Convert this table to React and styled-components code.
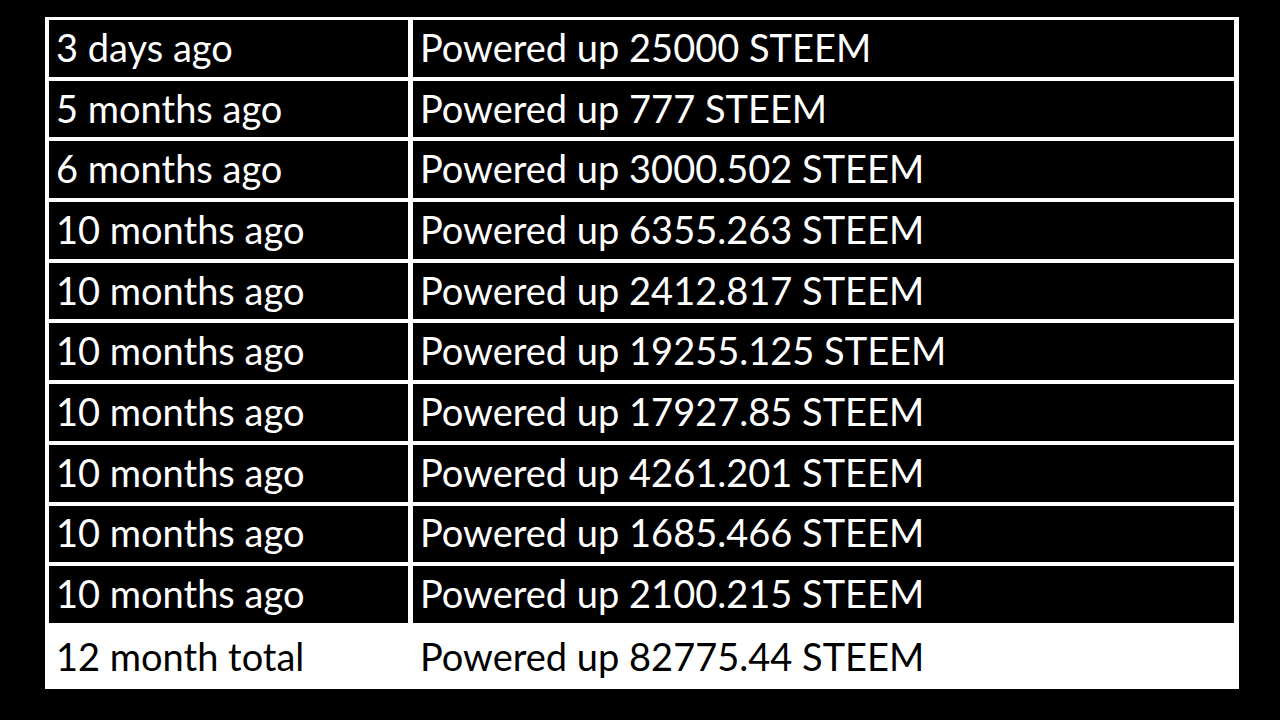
import React from 'react'
import styled, { createGlobalStyle } from 'styled-components'

const rows = [
  ['3 days ago', 'Powered up 25000 STEEM'],
  ['5 months ago', 'Powered up 777 STEEM'],
  ['6 months ago', 'Powered up 3000.502 STEEM'],
  ['10 months ago', 'Powered up 6355.263 STEEM'],
  ['10 months ago', 'Powered up 2412.817 STEEM'],
  ['10 months ago', 'Powered up 19255.125 STEEM'],
  ['10 months ago', 'Powered up 17927.85 STEEM'],
  ['10 months ago', 'Powered up 4261.201 STEEM'],
  ['10 months ago', 'Powered up 1685.466 STEEM'],
  ['10 months ago', 'Powered up 2100.215 STEEM'],
]

const GlobalStyle = createGlobalStyle`
  html, body {
    margin: 0;
    padding: 0;
    background: #000;
  }
  body {
    width: 1280px;
    height: 720px;
    overflow: hidden;
  }
`

const Page = styled.div`
  width: 1280px;
  height: 720px;
  background: #000;
  padding: 17px 0 0 45px;
  box-sizing: border-box;
`

const Table = styled.div`
  width: 1194px;
  height: 672px;
  box-sizing: border-box;
  background: #fff;
  padding: 3px 5px 0 4px;
  display: grid;
  grid-template-columns: 359px 821px;
  grid-template-rows: repeat(10, 56.7px) 1fr;
  column-gap: 5px;
  row-gap: 4px;
`

const Cell = styled.div`
  background: ${p => (p.$total ? '#fff' : '#000')};
  color: ${p => (p.$total ? '#000' : '#fff')};
  font-family: Lato, 'Noto Sans', sans-serif;
  font-size: 38px;
  display: flex;
  align-items: center;
  padding: 0 0 3px 7px;
  white-space: nowrap;
`

export default function App() {
  return (
    <>
      <GlobalStyle />
      <Page>
        <Table>
          {rows.map(([when, what], i) => (
            <React.Fragment key={i}>
              <Cell>{when}</Cell>
              <Cell>{what}</Cell>
            </React.Fragment>
          ))}
          <Cell $total>12 month total</Cell>
          <Cell $total>Powered up 82775.44 STEEM</Cell>
        </Table>
      </Page>
    </>
  )
}
